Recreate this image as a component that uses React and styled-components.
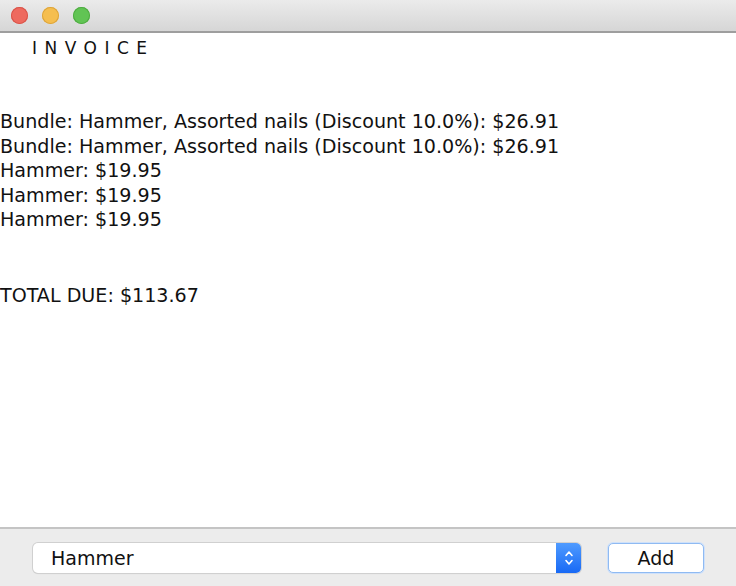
import styled, { createGlobalStyle } from 'styled-components'

const GlobalStyle = createGlobalStyle`
  html, body {
    margin: 0;
    padding: 0;
    background: #ffffff;
  }
  body {
    font-family: "DejaVu Sans", "Noto Sans", sans-serif;
  }
`

const Window = styled.div`
  width: 736px;
  height: 586px;
  display: flex;
  flex-direction: column;
  background: #ffffff;
  overflow: hidden;
`

const TitleBar = styled.div`
  height: 31px;
  flex-shrink: 0;
  display: flex;
  align-items: center;
  gap: 14px;
  padding-left: 11px;
  background: linear-gradient(#ebebeb, #d6d6d6);
  border-bottom: 2px solid #9e9e9e;
`

const Light = styled.span`
  width: 17px;
  height: 17px;
  border-radius: 50%;
  background: ${p => p.color};
  box-shadow: inset 0 0 0 1px ${p => p.edge};
`

const Content = styled.div`
  flex: 1;
  display: flex;
  flex-direction: column;
`

const Heading = styled.h1`
  margin: 3px 0 0 32px;
  font-family: "DejaVu Sans", sans-serif;
  font-weight: normal;
  font-size: 17px;
  letter-spacing: 7.5px;
  color: #111;
  line-height: 24px;
`

const Lines = styled.div`
  margin-top: 50px;
  display: flex;
  flex-direction: column;
`

const Line = styled.div`
  font-family: "DejaVu Sans", sans-serif;
  font-size: 19.1px;
  line-height: 24.6px;
  color: #111;
  white-space: nowrap;
  margin-top: ${p => (p.gap ? '51px' : '0')};
`

const BottomBar = styled.div`
  height: 57px;
  flex-shrink: 0;
  display: flex;
  align-items: center;
  gap: 27px;
  padding: 0 32px 0 33px;
  background: #ececec;
  border-top: 2px solid #c4c4c4;
`

const Select = styled.div`
  flex: 1;
  height: 30px;
  display: flex;
  align-items: stretch;
  background: #fff;
  border-radius: 5px;
  box-shadow: 0 0 0 1px #d0d0d0, 0 1px 1px rgba(0, 0, 0, 0.12);
  overflow: hidden;
`

const SelectLabel = styled.span`
  flex: 1;
  display: flex;
  align-items: center;
  padding-left: 18px;
  font-family: "DejaVu Sans", sans-serif;
  font-size: 19px;
  color: #111;
`

const Stepper = styled.span`
  width: 25px;
  display: flex;
  align-items: center;
  justify-content: center;
  background: linear-gradient(#4f9bff, #1869f5);
`

const Button = styled.button`
  width: 96px;
  height: 30px;
  background: #fff;
  border: 1px solid #8fbaf2;
  border-radius: 5px;
  box-shadow: 0 0 0 1px #cfe1fa;
  font-family: "DejaVu Sans", sans-serif;
  font-size: 19px;
  color: #111;
  padding: 0;
`

const invoiceLines = [
  'Bundle: Hammer, Assorted nails (Discount 10.0%): $26.91',
  'Bundle: Hammer, Assorted nails (Discount 10.0%): $26.91',
  'Hammer: $19.95',
  'Hammer: $19.95',
  'Hammer: $19.95',
]

const App = () => {
  return (
    <>
      <GlobalStyle />
      <Window>
        <TitleBar>
          <Light color='#ee6a5f' edge='#d85449' />
          <Light color='#f5be4f' edge='#dca43a' />
          <Light color='#61c454' edge='#4eab41' />
        </TitleBar>
        <Content>
          <Heading>INVOICE</Heading>
          <Lines>
            {invoiceLines.map((text, i) => (
              <Line key={i}>{text}</Line>
            ))}
            <Line gap>TOTAL DUE: $113.67</Line>
          </Lines>
        </Content>
        <BottomBar>
          <Select>
            <SelectLabel>Hammer</SelectLabel>
            <Stepper>
              <svg width='10' height='18' viewBox='0 0 10 18' fill='none' stroke='#fff' strokeWidth='1.6' strokeLinecap='round' strokeLinejoin='round'>
                <path d='M2 6.5 L5 3 L8 6.5' />
                <path d='M2 11.5 L5 15 L8 11.5' />
              </svg>
            </Stepper>
          </Select>
          <Button>Add</Button>
        </BottomBar>
      </Window>
    </>
  )
}

export default App
